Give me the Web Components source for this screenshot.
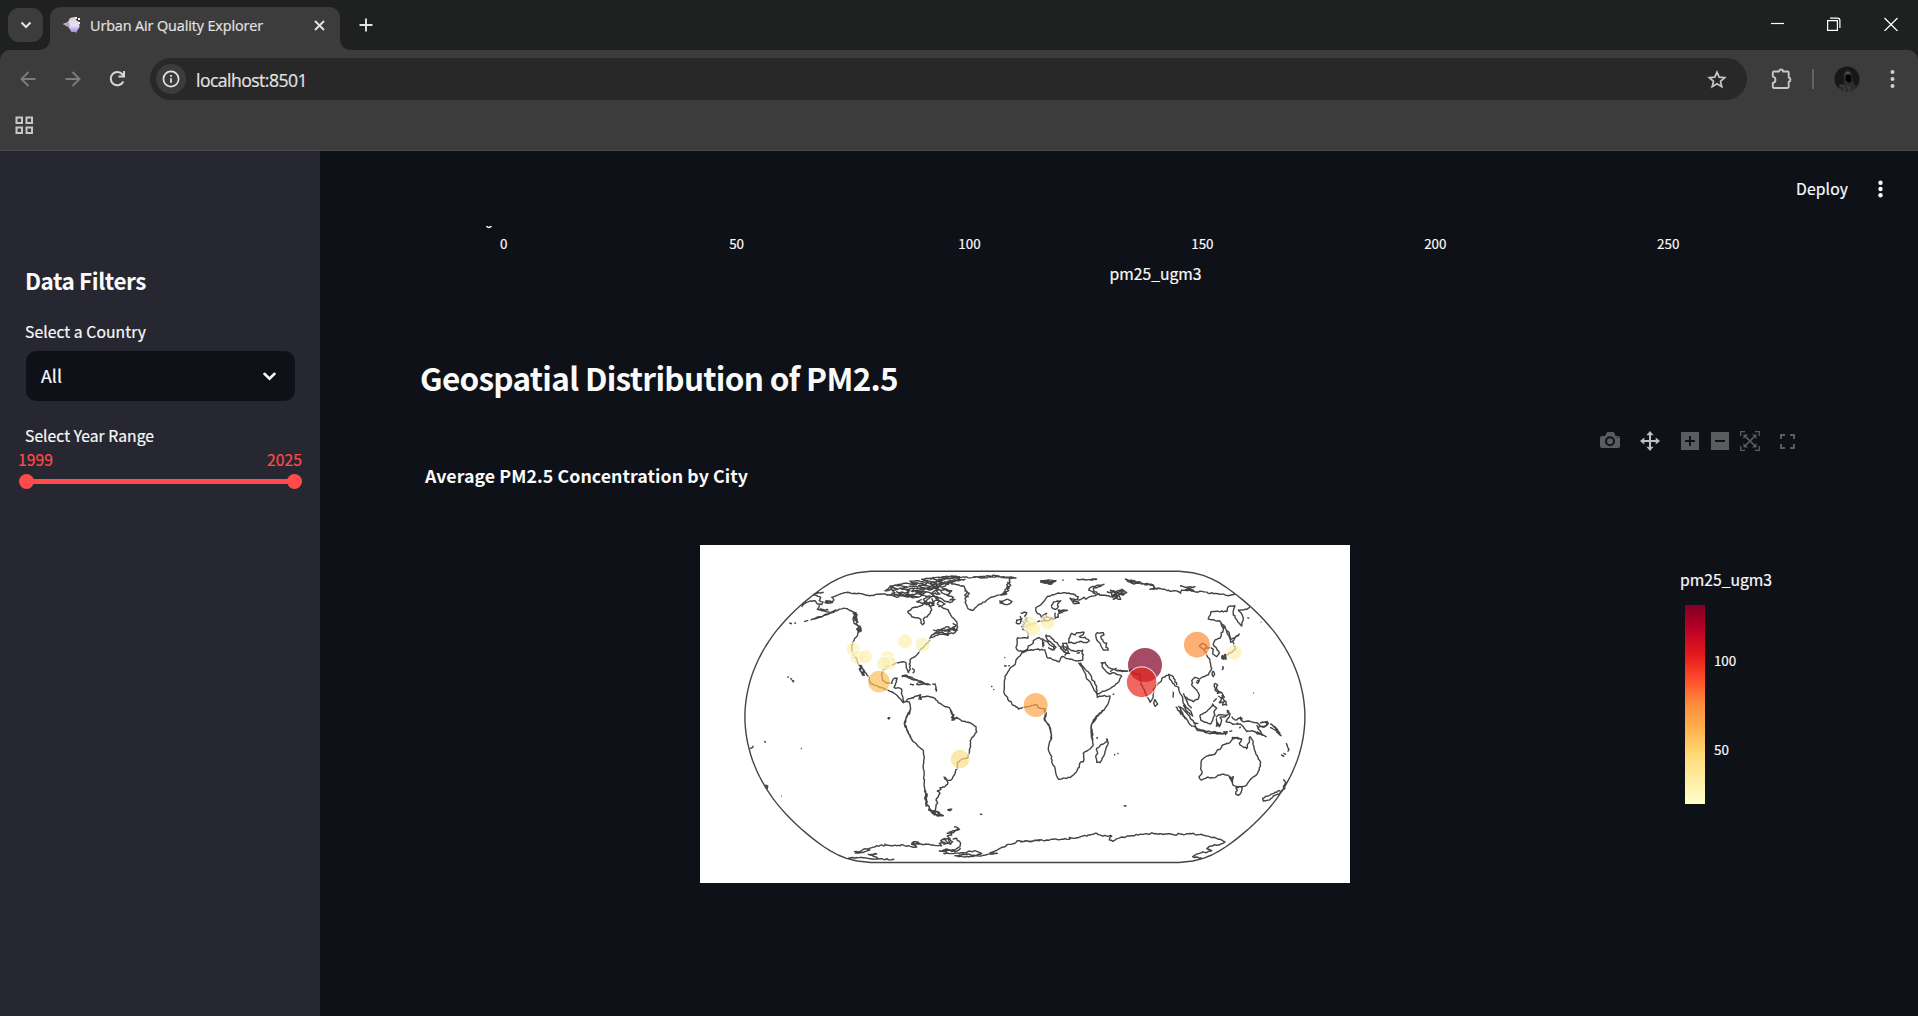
<!DOCTYPE html>
<html lang="en">
<head>
<meta charset="utf-8">
<title>Urban Air Quality Explorer</title>
<style>
html,body{margin:0;height:100%;overflow:hidden;background:#0e1117}
body{font-family:"Noto Sans CJK SC","Noto Sans",sans-serif;color:#fafafa}
</style>
</head>
<body>
<air-app></air-app>
<script>
const define=(name,html,ready)=>customElements.define(name,class extends HTMLElement{
  constructor(){super();this.attachShadow({mode:'open'}).innerHTML=html}
  connectedCallback(){if(ready)ready.call(this,this.shadowRoot)}
});

/* Text set to a known width: w = width, s = size, l = line height */
define('fit-text',`<style>:host{display:block;white-space:nowrap;flex:none;-webkit-text-stroke:.2px currentColor}span{display:inline-block}</style><span><slot></slot></span>`,function(r){
  const w=+this.getAttribute('w'),s=r.querySelector('span');
  this.style.fontSize=this.getAttribute('s')+'px';
  this.style.lineHeight=this.style.height=this.getAttribute('l')+'px';
  this.style.width=w+'px';
  const n=this.textContent.length;
  const cur=s.getBoundingClientRect().width;
  if(cur)s.style.letterSpacing=((w-cur)/n)+'px';
});

define('tab-strip',`<style>
:host{display:flex;height:50px;background:#1f2120;align-items:flex-start;font-family:"Open Sans","Noto Sans",sans-serif;color:#e3e3e3}
svg{display:block;flex:none}
.drop{margin:8px 0 0 8px;width:35px;height:34px;border-radius:11px;background:#3c3c3c;display:grid;place-items:center}
.tab{position:relative;margin-left:7px;width:290px;height:50px;display:flex;align-items:center}
.bg{position:absolute;left:-13px;top:0;z-index:0}
.tab>*:not(.bg){position:relative;z-index:1}
.ic{margin:0 9px 0 13px}
.x{margin-left:auto;margin-right:15px}
.plus{margin:18px 0 0 19px}
.win{margin-left:auto;display:flex;gap:43px;padding:17px 20px 0 0}
</style>
<div class="drop"><svg width="12" height="8" viewBox="0 0 12 8"><path d="M1.500 1.500 6 6l4.500-4.500" fill="none" stroke="#e3e3e3" stroke-width="2"/></svg></div>
<div class="tab"><svg class="bg" width="317" height="50"><path d="M0 50h1Q13 50 13 38V19Q13 7 25 7H291Q303 7 303 19V38Q303 50 315 50h1z" fill="#3c3c3c"/></svg>
<svg class="ic" width="18" height="18" viewBox="0 0 18 18"><defs><linearGradient id="g" x2="0" y2="1"><stop stop-color="#d9cfd6"/><stop offset=".55" stop-color="#e9e2f4"/><stop offset="1" stop-color="#a48be8"/></linearGradient></defs><path d="M0 8 5 6 7 2l5-1 1 3 3 2 .5 5-3 5-5 0-3-5z" fill="url(#g)"/><path d="M0 8l6-2 1 4-1 1z" fill="#b5a3b8"/><path d="M12 1h2v2h-2zM15 2h2v2h-2zM15 6h2v2h-2z" fill="#eee"/><path d="M12.500 15h1.500v1.500h-1.500z" fill="#a995df"/></svg>
<fit-text w="173" s="14.400" l="20" style="margin-top:1px">Urban Air Quality Explorer</fit-text>
<svg class="x" width="11" height="11" viewBox="0 0 11 11"><path d="M1 1l9 9M10 1l-9 9" stroke="#e3e3e3" stroke-width="1.900"/></svg></div>
<svg class="plus" width="14" height="14"><path d="M7 .5v13M.5 7h13" stroke="#e3e3e3" stroke-width="1.900"/></svg>
<div class="win"><svg width="13" height="14"><path d="M0 6.500h13" stroke="#fff" stroke-width="1.200"/></svg>
<svg width="14" height="15"><path d="M.6 3.600h9.800v9.800h-9.800zM3 1.100h7.500q2.400 0 2.400 2.400v7.500" fill="none" stroke="#fff" stroke-width="1.200"/></svg>
<svg width="14" height="14"><path d="M.5 1l13 13M13.500 1l-13 13" stroke="#fff" stroke-width="1.200"/></svg></div>`);

define('browser-toolbar',`<style>
:host{display:block;height:100px;background:#1f2120;border-bottom:1px solid #4b4b4c;font-family:"Open Sans","Noto Sans",sans-serif}
.in{background:#3c3c3c;border-radius:10px 10px 0 0;height:100px}
.row{display:flex;align-items:center;height:58px}
svg{display:block;flex:none}
.pill{flex:1;margin-left:23px;margin-right:24px;height:42px;border-radius:21px;background:#282828;display:flex;align-items:center}
.info{width:30px;height:30px;border-radius:50%;background:#3c3c3c;display:grid;place-items:center;margin:0 10px 0 6px}
.star{margin-left:auto;margin-right:20px}
.sep{width:2px;height:20px;background:#5f6163;margin:0 20px 0 19px}
.apps{margin:8px 0 0 15px}
</style>
<div class="in"><div class="row">
<svg style="margin-left:20px" width="16" height="16"><path d="M15.500 8H1.500M8.500 1 1.500 8l7 7" fill="none" stroke="#7c7c7c" stroke-width="1.900"/></svg>
<svg style="margin-left:29px" width="16" height="16"><path d="M.5 8h14M7.500 1l7 7-7 7" fill="none" stroke="#7c7c7c" stroke-width="1.900"/></svg>
<svg style="margin-left:28px" width="18" height="18"><path d="M14.300 11.500A6.600 6.600 0 1 1 13.500 4.500L15 6.200" fill="none" stroke="#d8d8d8" stroke-width="2"/><path d="M16 1v6.500H9.500v-2H14V1z" fill="#d8d8d8"/></svg>
<div class="pill"><div class="info"><svg width="18" height="18"><circle cx="9" cy="9" r="7.600" fill="none" stroke="#e3e3e3" stroke-width="1.700"/><path d="M9 8.200v4.500M9 5v1.800" stroke="#e3e3e3" stroke-width="1.800"/></svg></div>
<fit-text w="111" s="17.600" l="24" style="color:#e3e3e3;margin-top:1px">localhost:8501</fit-text>
<svg class="star" width="20" height="19" viewBox="0 0 20 19"><path d="M10 2.200l2.200 5 5.500.5-4.200 3.600 1.300 5.400L10 13.800l-4.800 2.900 1.300-5.400L2.300 7.700l5.500-.5z" fill="none" stroke="#c7c7c7" stroke-width="1.700"/></svg></div>
<svg width="22" height="22" viewBox="0 0 22 22"><path d="M3 3.500H8a2 2 0 0 1 4 0h4.500q1.200 0 1.200 1.200V9.500a2.200 2.200 0 0 1 0 4.300v5q0 1.200-1.200 1.200H3q-1.200 0-1.200-1.200V15c3.500-.4 3.500-6 0-6.400V4.700Q1.800 3.500 3 3.500z" fill="none" stroke="#c7c7c7" stroke-width="1.900" stroke-linejoin="round"/></svg>
<div class="sep"></div>
<svg width="26" height="26"><defs><clipPath id="c"><circle cx="13" cy="13" r="12.500"/></clipPath></defs><g clip-path="url(#c)"><path d="M0 0h26v26H0z" fill="#171718"/><path d="M10 18 9.500 8Q13 1 17.500 7L19 15l4 8-9 3-10-2 2-5z" fill="#2d2d2e"/><path d="M11 8.500q2.500-5.500 6 0l-1-.8q-2-1.700-4 .5z" fill="#606060"/><path d="M12 9h5l.5 6-3 2-3-3z" fill="#030303"/><path d="M5 20l3-1 3 4-1 3M13 20l3 2-2 4" fill="none" stroke="#4a4a4b"/></g></svg>
<svg style="margin:0 23px 0 30px" width="5" height="20"><g fill="#d0d0d0"><circle cx="2.500" cy="3" r="2"/><circle cx="2.500" cy="10" r="2"/><circle cx="2.500" cy="17" r="2"/></g></svg>
</div>
<svg class="apps" width="19" height="19"><path d="M1.500 1.500h5.500v5.500h-5.500zM11.500 1.500h5.500v5.500h-5.500zM1.500 11.500h5.500v5.500h-5.500zM11.500 11.500h5.500v5.500h-5.500z" fill="none" stroke="#c7c7c7" stroke-width="2"/></svg></div>`);

define('year-slider',`<style>
:host{display:block;margin:2px -7px 0 -8px}
.v{display:flex;justify-content:space-between;color:#ff4b4b}
.t{margin-top:4px;height:15px;display:flex;align-items:center;padding:0 0 0 1px}
i{width:15px;height:15px;border-radius:50%;background:#ff4b4b;flex:none}
b{flex:1;height:5px;margin:0 -2px;background:#ff4b4b}
</style><div class="v"><fit-text w="35" s="15.700" l="20">1999</fit-text><fit-text w="35" s="15.700" l="20">2025</fit-text></div>
<div class="t"><i></i><b></b><i></i></div>`);

define('side-bar',`<style>
:host{display:block;box-sizing:border-box;width:320px;flex:none;background:#262730;padding:114px 25px 0 26px}
.sel{margin-top:7px;height:50px;border-radius:10px;background:#0e1117;display:flex;align-items:center;justify-content:space-between;padding:0 19px 0 15px}
.n{margin-left:-1px}
</style>
<fit-text class="n" w="121" s="22.500" l="30" style="font-weight:700;-webkit-text-stroke:0">Data Filters</fit-text>
<fit-text class="n" w="121" s="15.700" l="24" style="margin-top:25px">Select a Country</fit-text>
<div class="sel"><fit-text w="21" s="17.800" l="26" style="margin-top:-2px">All</fit-text><svg width="13" height="9"><path d="M1.500 1.800 6.500 6.600l5-4.800" fill="none" stroke="#fafafa" stroke-width="2.600" stroke-linecap="round"/></svg></div>
<fit-text class="n" w="129" s="15.700" l="24" style="margin-top:23px">Select Year Range</fit-text>
<year-slider></year-slider>`);

define('app-header',`<style>:host{display:flex;height:75px;justify-content:flex-end}fit-text{margin-top:26px}svg{margin:29px 34px 0 29px}</style>
<fit-text w="52" s="15.700" l="24">Deploy</fit-text><svg width="7" height="18"><g fill="#fafafa"><circle cx="3.500" cy="2.800" r="2.200"/><circle cx="3.500" cy="9" r="2.200"/><circle cx="3.500" cy="15.200" r="2.200"/></g></svg>`);

define('histogram-axis',`<style>:host{display:block;height:131px}svg{display:block}text{fill:#fafafa;text-anchor:middle;stroke:#fafafa;stroke-width:.2px}</style>
<svg width="1598" height="90"><path d="M166.500 0Q168.800 3 171.500 0" fill="none" stroke="#fafafa" stroke-width="1.500"/><g font-size="13.400"></g><text x="835.500" y="54" font-size="15.700" textLength="92">pm25_ugm3</text></svg>`,function(r){
  r.querySelector('g').innerHTML=[0,50,100,150,200,250].map((v,i)=>`<text x="${183.700+i*232.900}" y="23">${v}</text>`).join('');
});

define('mode-bar',`<style>:host{display:flex;justify-content:flex-end;align-items:center;height:22px}svg{display:block}</style>
<svg width="20" height="18" style="margin-right:20px"><path fill="#5b5c60" fill-rule="evenodd" d="M2 4h3l1.500-3q.4-1 1.500-1h5q1 0 1.400 1L15.500 4H18q2 0 2 2v8q0 2-2 2H2q-2 0-2-2V6q0-2 2-2zM10 4.300a5 5 0 1 0 0 10 5 5 0 0 0 0-10zM10 6.300a3 3 0 1 1 0 6 3 3 0 0 1 0-6zM17 5h1v1h-1z"/></svg>
<svg width="20" height="20" style="margin-right:21px"><path fill="#bfc0c1" d="M10 0l3.600 4.300H11V9h4.700V6.400L20 10l-4.300 3.600V11H11v4.700h2.600L10 20l-3.600-4.300H9V11H4.300v2.600L0 10l4.300-3.600V9H9V4.300H6.400z"/></svg>
<svg width="18" height="18" style="margin-right:12px"><path fill="#5b5c60" fill-rule="evenodd" d="M0 0h18v18H0zM8 4v4H4v2h4v4h2v-4h4V8h-4V4z"/></svg>
<svg width="18" height="18" style="margin-right:11px"><path fill="#5b5c60" fill-rule="evenodd" d="M0 0h18v18H0zM4 8v2h10V8z"/></svg>
<svg width="20" height="20" style="margin-right:20px"><path fill="none" stroke="#5b5c60" stroke-width="1.300" d="M.7 5V.7H5M15 .7h4.300V5M19.300 15v4.300H15M5 19.300H.7V15"/><path d="M5 5l10 10M15 5 5 15" stroke="#5b5c60" stroke-width="1.700"/><path fill="#5b5c60" d="M3.500 3.500H8L3.500 8zM16.500 3.500V8L12 3.500zM16.500 16.500H12l4.500-4.500zM3.500 16.500V12L8 16.500z"/></svg>
<svg width="15" height="15"><path fill="none" stroke="#5b5c60" stroke-width="2" d="M1 5V1h4M10 1h4v4M14 10v4h-4M5 14H1v-4"/></svg>`);

/* Coastlines, grouped by tile. Tile units are a third of a pixel. */
const TILES=[
[30,15,`215,140 228,128 240,123 255,122 262,132 275,134 279,126 268,122 272,112 258,106 250,104 265,97
262,97 272,99 281,97|268,135 262,148 275,152 290,155 300,158 312,152 325,150 340,145 355,149 368,155 380,158
300,130 285,128 288,122 306,126 312,120 305,112 330,102 352,97 380,101 400,103 430,107 455,102 480,105 500,103 520,108 545,112 565,112
318,148 305,158 280,168 260,175 242,180|312,152 295,161 270,170 250,177|270,146 285,151 295,150|287,124 300,123 308,127 290,131|235,181 222,185|198,190 193,189|186,191 178,189
370,157 374,165 369,178 372,190 383,197 392,203 394,212 384,217 380,230 372,242 367,255 365,270 370,282 381,300 384,312 392,320 400,328 411,345 418,352 420,367 430,374 450,383 470,388 485,395 500,405 512,418 520,428 528,424 538,426 541,440 540,455 528,475 524,490 530,510 545,540
378,160 380,170 374,180 384,186 376,192 386,200 380,208 391,214 384,205 390,198|372,162 378,176 380,188|374,172 383,178|380,195 393,208 382,214|368,160 382,164 370,172 383,182
386,315 394,324 390,332 400,338 397,345 403,346 400,330 390,314|393,318 388,328 396,342
172,350 177,352|181,355 186,358|185,361 191,363 188,367|473,473 479,473 476,477 473,473
600,240 585,255 570,270 565,280 555,290 540,300 538,312 541,328 535,335 529,320 528,308 515,306 500,308 488,314 470,318 460,330 455,345 458,362 470,370 485,370 490,357 502,355 497,370 492,382 515,388 516,405 522,424
515,348 530,346 545,352 560,359 570,363 578,366 562,362 545,358 530,350 515,351|540,372 552,374|564,369 560,373 580,372 600,374 582,369 565,367|607,372 613,373|617,383 620,390 618,395|546,325 553,330 548,340|532,335 538,338
528,424 535,416 550,414 560,408 572,404 568,412 585,410 603,411 615,415 630,430 645,440 658,443 665,455 668,468 676,475 690,478|568,405 574,418 565,416|663,470 672,480 664,480
570,138 560,142 545,145 533,155 545,170 560,173 572,178 573,190 578,194 583,189 580,177 595,165 605,150 600,138 585,128 570,138
605,135 618,120 630,122 622,132 632,138 640,145 655,150 665,170 672,176 680,185 681,205 674,212 665,208 655,200 640,205 625,215 605,225 600,237
603,232 622,226 640,222 655,226 640,218 612,220 635,210 660,214 648,224 675,218 682,210 665,205 678,196 668,190|610,210 640,212 675,205
480,105 495,98 485,88 465,92 478,82 500,86 480,78 510,76 530,80 515,88 540,92 525,100 500,95 515,107 540,104 560,112 580,106 565,97 590,95
500,73 530,70 560,74 540,64 565,62 590,70 575,76 600,80 620,70 600,64 575,58 600,55 630,62 655,56 690,55|545,85 575,84 600,90 625,84 605,100 630,102 618,92 645,88 660,98 650,105 670,112 660,120 675,118 660,128 640,120 622,110 600,108 580,118 590,126 612,130 605,115
580,60 610,75 640,68 625,58 660,50 690,50|485,100 530,110 560,100 600,112 580,130 560,125 575,118|490,90 550,78 580,90 630,75 670,65 640,80 600,85|555,95 600,98 625,120 645,132 625,140|635,84 665,92 655,108 635,98 628,88
484,102 500,112 520,104 508,98 536,98 530,108 552,106|510,84 530,88 552,86 545,94 565,92 585,98 575,102|545,70 560,68 580,72 565,78 590,84 612,78 632,80|575,130 590,134 600,128 612,136 596,138`],
[230,15,`0,56 25,52 55,50 90,52 130,52 160,49 200,47 220,50 258,54 238,57 240,68 230,75 238,84 225,88 228,98 215,103 198,108 180,113 165,126 148,133 138,142 130,151 114,146 108,132 105,115 110,110 118,100 108,92 103,80 85,74 65,72 62,66 85,62 105,58 60,62 35,70 20,64 0,68
232,66 242,76 230,82 236,92 222,96 230,102 212,106|103,92 112,98 104,106 116,110|130,50 160,53 200,49 225,53 245,52
208,123 222,122 230,118 246,124 240,131 222,133 210,129 218,126 208,123|330,63 355,60 378,62 365,72 345,70 332,66 360,66|338,66 370,64 355,72 345,64|397,60 401,61|440,57 470,59 500,57 480,60
355,172 348,170 350,160 342,164 335,175 332,166 322,160 317,152 318,142 332,135 342,124 350,112 365,105 385,99 400,98 425,102 445,110 442,118 420,115 428,125 445,126 448,130 430,130 432,120 448,120 462,112 468,118 480,110 500,104 520,106 545,110
364,140 370,126 382,123 392,122 384,130 385,140 378,148 368,145 364,140|355,172 370,176 385,172 384,164 390,155 412,151 400,150 385,150 388,160 398,158|376,158 376,175 360,180 345,182 330,183|335,170 345,178 338,182|498,103 490,98 476,90 482,82 498,78 522,73 505,80 490,85 492,95 510,102
530,95 545,100 548,112 560,105 550,92 565,100 560,115 572,118 565,102 580,105 590,98 575,88 555,98 540,90|585,57 600,63 630,66 635,72 612,66 590,62|600,60 628,70|635,72 670,75 675,85 690,87
330,183 318,188 300,195 285,198 278,208 290,213 295,222 293,235 263,233 262,245 258,262 265,272 278,274 292,268 295,258 310,248 310,242 322,234 338,237 348,243 360,255 371,260 372,270 378,262 365,250 350,235 348,225 362,231 372,243 382,248 388,258 396,268 402,276 408,270 400,262 398,250 410,250 414,265 425,272 440,274 458,270 458,300 440,303 420,298 395,290 388,305 370,300 350,290 345,270 320,268 300,271 275,278 270,288 258,300 256,312 242,322 228,345 223,368 222,392 225,405 245,430 265,447 290,440 317,433 328,445 346,447 348,465 343,480 355,495 362,510 363,540
390,262 410,280 405,285 415,278 410,262 396,258 402,268|337,240 338,262|341,245 342,258|355,262 368,270 360,266|405,280 420,281|440,280 450,278
258,190 260,180 270,178 276,176 272,188 262,191 258,190|272,160 282,156 290,158 284,168 292,175 285,180 298,192 290,200 275,200 284,190 274,182 270,168
415,250 416,237 425,220 435,225 440,218 462,217 455,226 448,230 465,232 478,242 470,248 450,244 436,250 418,248|500,218 520,218 522,225 512,230 520,245 530,250 528,262 535,270 520,270 512,255 505,245 498,232 500,218
445,308 460,330 468,350 480,365 490,385 500,400 502,412 520,408 540,408 535,430 525,445 505,465 490,480 484,500 488,520 487,540|450,308 460,320 478,340 490,362 500,380 502,402 525,393 545,382 562,370 575,348 558,342 548,338 540,342 530,336 520,325 514,308 525,307 535,322 550,328 560,332 580,334 597,334 605,328 615,345
222,318 230,317|235,319 239,316|223,293 226,292|184,378 187,381|190,388 193,390|15,370 18,380 16,390|548,403 553,403|500,532 502,536|528,538 533,537`],
[410,15,`0,335 18,325 15,330 40,332 65,334 72,340 90,343 90,362 98,382 108,402 120,427 128,415 130,388 145,370 160,352 175,346 182,360 195,378 206,382 210,400 218,412 220,430 228,442 238,450 248,468 232,455 220,435
134,418 143,432 136,439 131,430 134,418|190,395 190,413|174,343 190,350 200,375
0,98 15,95 30,103 18,110 10,118 20,110 8,106 25,98 40,92 30,104 45,98|45,57 65,63 90,68 72,72 50,62|60,60 95,70 130,75 135,85 120,88 140,85 160,88 180,94 195,92 212,100 215,90 240,90 260,96 280,95 310,101 340,102 355,107 375,103
210,78 225,82 255,80 240,86 225,90 250,90 220,80
220,400 224,410 240,420 250,425 264,418 268,405 260,390 247,378 245,362 255,352 268,358 280,350 295,345 305,325 300,300 290,285 283,270 272,262 268,258 278,250 290,258 284,268 300,262 310,268 308,282 320,290 328,280 318,262 310,255 315,240 330,235 340,205 328,182 295,177 303,155 325,154 350,155 355,140 375,138 372,145 370,165 382,182 395,198 400,180 395,162 385,150 410,148 420,140
330,182 340,196 348,208 355,225 362,238 358,220 345,200 332,190|358,230 362,247 372,240 375,232 388,222 375,235 360,240|368,245 375,260 376,268 362,278 352,285 345,283 342,298 335,295 338,285|335,290 345,286 348,298 336,292|338,318 340,325 336,330|310,333 314,342 310,350 306,343 310,333|260,362 268,362 264,370 258,366|412,173 418,175|430,398 431,400|452,186 454,187
316,370 323,375 320,388 330,398 316,392 313,380 316,370|320,400 332,396 342,410 335,412 348,425 350,435 338,435 342,425 328,428 335,415 325,408|310,425 320,415|335,405 345,412
270,465 285,458 300,445 308,432 320,445 312,455 315,465 302,492 285,487 272,480 270,465|205,438 215,455 225,475 245,498 258,502 252,488 235,465 222,450 210,440|255,503 275,510 300,515 325,518 350,520 322,522 290,518 258,508|250,488 265,490|340,515 352,515 345,525
318,472 325,465 340,465 355,462 345,470 330,472 335,480 328,500 320,485 328,495 318,498|320,475 318,500|350,455 360,460 355,475 348,485 365,490 385,493|365,470 375,480 390,475 400,485 415,483 440,488 455,500 470,495 472,485 450,488|380,488 400,500 410,515 425,512 445,522 460,525 448,510 440,495|480,492 495,500 505,515 515,528|490,500 500,512|365,535 380,532 395,538|350,450 358,455|390,470 398,478|455,485 470,490
225,410 235,435 245,445|197,440 220,470|210,450 232,480`],
[30,165,`541,0 528,25 523,40 525,50 532,60 540,80 550,95 560,103 577,118 581,135 581,160 582,190 583,215 585,240 588,262 590,282 603,300 615,312 640,317 622,318 605,305 610,302 630,310 620,303|583,240 590,255 584,265 592,275 587,285 598,290 596,300 610,310|590,250 588,290
662,0 665,12 672,15 665,22 668,28 680,22 695,33 715,37 728,43 738,50 740,65 730,80 721,92 720,115 715,135 711,145 695,148 682,158 683,175 677,180 673,195 665,208 655,211 642,201 645,207 654,218 645,230 630,233 633,238 622,243 630,250 624,262 618,270 623,280 618,290 616,303
652,300 665,298 660,302 653,300|750,312 757,314|473,23 479,23|102,94 108,97|213,115 215,117|153,259 155,259|60,116 68,112 70,107|106,225 113,228 112,235 108,230
600,302 618,306 612,314 635,314
355,444 400,443 445,447 493,448|372,427 392,423 405,416 420,420 395,427 375,430|400,418 425,413 440,407 465,406 465,402 490,407 520,405 545,410 560,411 545,403 568,400 555,395 545,400 570,402 600,404 635,407 628,400 645,398 632,392 645,385 650,395 662,403 668,395 652,378 665,375 658,366 675,362 685,355 672,350|640,390 655,385 660,400 640,403|650,370 670,368 690,356|668,388 680,385 692,400 690,410 675,420 650,417 628,423 650,426 645,420 675,425 692,415
425,435 440,432 415,433 435,440 450,447|640,430 675,430 700,428 735,422 755,430 740,436 700,433 675,437 720,440 760,436 785,432 802,430 780,428 795,423 830,405 855,400 862,392 880,395 890,392 905,395 930,389`],
[320,165,`72,0 75,15 72,25 88,50 95,85 88,100 85,118 95,140 97,160 105,175 110,198 116,208 130,204 150,203 165,190 178,172 180,158 190,155 192,148 190,130 205,120 218,108 218,90 213,65 214,45 230,20 253,0
262,88 265,100 258,115 250,140 240,158 230,157 227,140 233,130 230,115 245,103 255,98 262,88|230,83 234,85|282,134 286,134|292,130 296,131|311,287 318,287 315,289
540,208 537,200 546,190 543,170 545,150 560,138 585,132 592,120 600,118 605,108 620,100 630,98 635,90 645,85 665,88 658,100 665,108 680,116 685,100 690,80 697,90 700,105 706,125 712,138 722,158 718,180 705,198 690,210 680,225 665,230 655,230 640,226 637,210 630,200 622,195 605,193 590,200 575,203 560,203 545,210 540,208|628,200 635,215 640,200 630,208
647,232 667,232 663,248 655,256 647,252 652,242 647,232|790,208 797,218 790,230 795,235 785,245 775,242 750,255 728,265 730,273 748,270 760,258 778,252 788,238|783,135 793,140|798,100 807,118 803,125|790,130 798,133
0,395 25,394 50,391 80,390 110,388 150,387 148,382 165,385 190,378 210,375 225,370 245,377 275,378 268,390 278,394 295,385 330,378 360,373 390,372 395,368 410,372 440,372 470,375 475,370 490,374 520,370 530,375 545,373 560,378 580,382 605,390 615,396 595,405 570,408 560,416 575,422 545,428 530,432 518,440 545,443
710,65 725,75 740,80|740,33 745,40 735,50 715,52|750,52 765,60 780,75|628,65 637,62|658,55 662,50`]];
const CITIES=[[30,15,370,268,20],[30,15,382,292,20],[30,15,406,290,20],[30,15,473,293,20],[30,15,478,309,20],[30,15,462,311,21],[30,15,525,244,21],[30,15,578,254,21],[30,15,447,365,32.500,'#fdc15c'],
[230,15,298,191,21],[230,15,308,206,22],[230,15,353,187,21],[230,15,317,435,36,'#fea549'],[410,15,105,315,51,'#800026'],[410,15,95,367,44.500,'#e9271d'],[410,15,261,254,39,'#fe8e3a'],[410,15,373,277,22],[30,165,690,147,28,'#fddf88']];

define('geo-map',`<style>:host{display:block;width:650px;height:338px}svg{display:block;background:#fff}</style><svg width="650" height="338"><g fill="none" stroke="#444" stroke-width="1.400" stroke-linejoin="round"></g><g class="c" stroke="#fff" stroke-width="1.200"></g></svg>`,function(r){
  /* Natural Earth outline */
  const R=102.35,cx=324.9,cy=171.9,pt=(l,p)=>{const a=p*p,b=a*a;
    return[(cx+R*l*(.8707-.131979*a+b*(-.013791+b*(.003971*a-.001529*b)))).toFixed(1),(cy-R*p*(1.007226+a*(.015085+b*(-.044475+.028874*a-.005916*b)))).toFixed(1)].join()};
  const o=[];
  for(let i=-90;i<=90;i+=3)o.push(pt(-Math.PI,i*Math.PI/180));
  for(let i=90;i>=-90;i-=3)o.push(pt(Math.PI,i*Math.PI/180));
  let seed=7;const rnd=()=>(seed=(seed*16807)%2147483647)/2147483647-.5;
  let d='M'+o.join('L')+'Z';
  for(const[tx,ty,src]of TILES)for(const line of src.split(/[|\n]/)){
    const p=line.trim().split(/\s+/).map(s=>s.split(',').map(Number));
    p.forEach(([x,y],i)=>{
      if(i){const[a,b]=p[i-1],n=Math.floor(Math.hypot(x-a,y-b)/5);
        for(let k=1;k<n;k++){const t=k/n;d+=`L${(tx+(a+(x-a)*t+rnd()*4)/3).toFixed(1)} ${(ty+(b+(y-b)*t+rnd()*4)/3).toFixed(1)}`}}
      d+=(i?'L':'M')+(tx+x/3).toFixed(1)+' '+(ty+y/3).toFixed(1)});
  }
  r.querySelector('g').innerHTML=`<path d="${d}"/>`;
  r.querySelector('.c').innerHTML=CITIES.map(([a,b,x,y,q,c])=>`<circle opacity=".7" cx="${a+x/3}" cy="${b+y/3}" r="${q/3+.6}" fill="${c||'#fdf2b0'}"/>`).join('');
});

define('color-bar',`<style>:host{display:block}.b{display:flex;margin:13px 0 0 5px}
.g{width:20px;height:199px;background:linear-gradient(#800026,#bd0026 12.500%,#e31a1c 25%,#fc4e2a 37.500%,#fd8d3c 50%,#feb24c 62.500%,#fed976 75%,#ffeda0 87.500%,#ffffcc)}
.t{margin-left:9px;padding-top:45px;display:flex;flex-direction:column;gap:69px}</style>
<fit-text w="92" s="15.700" l="24">pm25_ugm3</fit-text>
<div class="b"><div class="g"></div><div class="t"><fit-text w="22" s="13.400" l="20">100</fit-text><fit-text w="15" s="13.400" l="20">50</fit-text></div></div>`);

define('geo-chart',`<style>:host{display:block}mode-bar{padding-right:123px;margin-top:33px}.t{margin:10px 0 0 105px;font-weight:700;-webkit-text-stroke:0}
.p{display:flex;margin-top:57px;padding-left:380px}color-bar{margin:23px 0 0 330px}</style>
<mode-bar></mode-bar><fit-text class="t" w="323" s="17.800" l="26">Average PM2.5 Concentration by City</fit-text>
<div class="p"><geo-map></geo-map><color-bar></color-bar></div>`);

define('main-view',`<style>:host{display:block;flex:1;background:#0e1117}.h{margin-left:100px;font-weight:700;-webkit-text-stroke:0}</style>
<app-header></app-header><histogram-axis></histogram-axis>
<fit-text class="h" w="478" s="31.500" l="40">Geospatial Distribution of PM2.5</fit-text>
<geo-chart></geo-chart>`);

define('air-app',`<style>:host{display:flex;flex-direction:column;height:100vh;overflow:hidden}.m{flex:1;display:flex;min-height:0}</style>
<tab-strip></tab-strip><browser-toolbar></browser-toolbar><div class="m"><side-bar></side-bar><main-view></main-view></div>`);
</script>
</body>
</html>
